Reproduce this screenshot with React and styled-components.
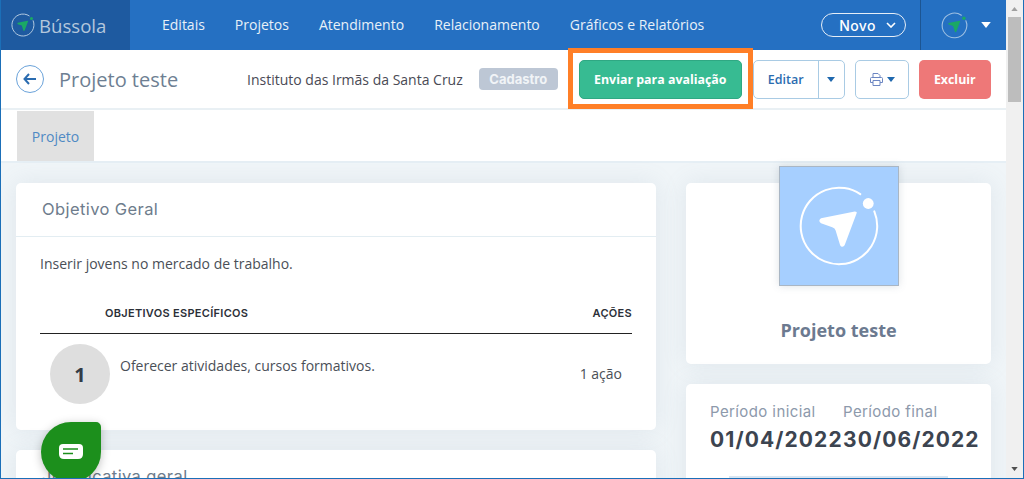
import React from "react";
import styled, { createGlobalStyle } from "styled-components";

const Global = createGlobalStyle`
  html, body { margin: 0; padding: 0; height: 100%; overflow: hidden; background: #fff; }
  * { box-sizing: border-box; }
  body { font-family: "Open Sans", "Liberation Sans", sans-serif; color: #3c4653; }
`;

const Frame = styled.div`
  position: relative;
  width: 1024px;
  height: 479px;
  overflow: hidden;
  display: flex;
  border-left: 1px solid #1b6fb8;
  border-right: 1px solid #1b6fb8;
  border-bottom: 1px solid #1b6fb8;
`;
const Page = styled.div`
  flex: 1;
  min-width: 0;
  display: flex;
  flex-direction: column;
  height: 560px;
`;
const ScrollTrack = styled.div`
  width: 17px;
  flex: none;
  background: #f0f0f0;
  position: relative;
`;
const ScrollThumb = styled.div`
  position: absolute;
  top: 17px;
  left: 2px;
  width: 13px;
  height: 85px;
  background: #bdbdbd;
`;
const ScrollArrow = styled.svg`
  position: absolute;
  left: 5px;
  ${p => p.$down ? "bottom: 7px;" : "top: 7px;"}
  width: 7px;
  height: 4px;
`;

const Header = styled.header`
  height: 50px;
  flex: none;
  background: #2570c2;
  display: flex;
  align-items: stretch;
`;
const Brand = styled.div`
  width: 129px;
  background: #1e5aa0;
  display: flex;
  align-items: center;
  padding-left: 9px;
  gap: 3px;
  color: #b4c7dc;
  font-size: 18.6px;
`;
const Nav = styled.nav`
  display: flex;
  align-items: center;
  gap: 30px;
  padding-left: 32px;
  flex: 1;
`;
const NavLink = styled.a`
  color: #e8f0f8;
  font-size: 14px;
  line-height: 50px;
`;
const NewButton = styled.button`
  width: 85px;
  height: 24px;
  margin: 13px 14px 0 0;
  border: 1px solid #e6eef7;
  border-radius: 12px;
  background: transparent;
  color: #fff;
  font: 500 14px "Inter", sans-serif;
  letter-spacing: 0.4px;
  display: flex;
  align-items: center;
  justify-content: center;
  gap: 10px;
  padding: 0 0 0 8px;
`;
const UserArea = styled.div`
  width: 86px;
  border-left: 1px solid #1c5592;
  display: flex;
  align-items: center;
  padding-left: 19px;
  gap: 12px;
`;

const TitleBar = styled.div`
  height: 60px;
  flex: none;
  display: flex;
  align-items: center;
  padding: 0 15px;
  border-bottom: 2px solid #e9f0f4;
  background: #fff;
`;
const BackButton = styled.div`
  width: 28px;
  height: 28px;
  border: 1px solid #6ba3da;
  border-radius: 50%;
  display: flex;
  align-items: center;
  justify-content: center;
  flex: none;
`;
const PageTitle = styled.h1`
  margin: 0 0 0 15px;
  font-size: 20px;
  font-weight: 400;
  color: #6e7f93;
  width: 188px;
  white-space: nowrap;
`;
const Org = styled.span`
  font-size: 14px;
  color: #4a4a55;
  white-space: nowrap;
`;
const Status = styled.span`
  margin-left: 16px;
  width: 79px;
  height: 22px;
  border-radius: 4px;
  background: #bdc7d5;
  color: #f1f4f7;
  font: 700 13px "Inter", sans-serif;
  display: flex;
  align-items: center;
  justify-content: center;
  flex: none;
`;
const HighlightWrap = styled.div`
  position: relative;
  margin-left: 21px;
  flex: none;
  &::after {
    content: "";
    position: absolute;
    left: -11px;
    right: -11px;
    top: -12px;
    bottom: -10px;
    border: 5px solid #ff7f27;
    pointer-events: none;
  }
`;
const ActionButton = styled.button`
  height: 39px;
  border-radius: 5px;
  border: 1px solid ${p => p.$border || "transparent"};
  background: ${p => p.$bg || "#fff"};
  color: ${p => p.$color || "#fff"};
  font: 700 12.4px "Open Sans", sans-serif;
  padding: 0;
  width: ${p => p.$w}px;
  margin-left: ${p => p.$ml || 0}px;
  flex: none;
  display: flex;
  align-items: center;
  justify-content: center;
`;
const Split = styled.div`
  margin-left: 11px;
  display: flex;
  height: 39px;
  width: 92px;
  border: 1px solid #a9cbe4;
  border-radius: 5px;
  flex: none;
`;
const SplitMain = styled.div`
  flex: 1;
  display: flex;
  align-items: center;
  justify-content: center;
  font: 600 12.5px "Open Sans", sans-serif;
  color: #2b6cb0;
  border-right: 1px solid #a9cbe4;
`;
const SplitCaret = styled.div`
  width: 25px;
  display: flex;
  align-items: center;
  justify-content: center;
`;
const PrintButton = styled(ActionButton)`
  gap: 3px;
`;

const Tabs = styled.div`
  height: 53px;
  flex: none;
  background: #fff;
  border-bottom: 2px solid #e6eff5;
  padding: 1px 0 1px 16px;
`;
const Tab = styled.div`
  width: 77px;
  height: 50px;
  background: #e1e1e1;
  color: #4f8ac4;
  font-size: 14px;
  display: flex;
  align-items: center;
  justify-content: center;
`;

const Content = styled.main`
  flex: 1;
  background: #f0f5f8;
  display: grid;
  grid-template-columns: 640px 305px;
  column-gap: 30px;
  padding: 20px 15px;
  align-content: start;
`;
const Column = styled.div`
  display: flex;
  flex-direction: column;
  gap: 20px;
  min-width: 0;
`;
const Card = styled.section`
  background: #fff;
  border-radius: 5px;
  box-shadow: 0 0 24px rgba(120, 140, 160, 0.14);
`;
const CardHead = styled.div`
  height: 54px;
  padding: 0 0 1px 26px;
  display: flex;
  align-items: center;
  font: 400 16.5px "Inter", sans-serif;
  letter-spacing: 0.4px;
  color: #6e7c8c;
  border-bottom: 1px solid #e3edf2;
`;
const CardBody = styled.div`
  padding: 17px 24px 0;
  height: 193px;
`;
const Text = styled.p`
  margin: 0;
  font-size: 14px;
  line-height: 19px;
  color: #4a4f57;
`;
const TableHead = styled.div`
  margin-top: 32px;
  height: 29px;
  display: flex;
  justify-content: space-between;
  padding-left: 65px;
  border-bottom: 1px solid #222;
  font: 600 11px "Inter", sans-serif;
  line-height: 16px;
  letter-spacing: 0.3px;
  color: #2c3038;
  text-transform: uppercase;
`;
const ObjectiveRow = styled.div`
  display: flex;
  padding: 10px 0 0 10px;
`;
const Circle = styled.div`
  width: 60px;
  height: 60px;
  border-radius: 50%;
  background: #dedede;
  color: #333c47;
  font-weight: 700;
  font-size: 20px;
  display: flex;
  align-items: center;
  justify-content: center;
  flex: none;
`;
const ObjectiveText = styled(Text)`
  margin: 12px 0 0 10px;
  flex: 1;
`;
const ActionCount = styled(Text)`
  margin: 20px 10px 0 0;
`;

const IdentityCard = styled(Card)`
  height: 181px;
  display: flex;
  flex-direction: column;
  align-items: center;
`;
const Logo = styled.div`
  width: 120px;
  height: 120px;
  margin-top: -17px;
  background: #a6cfff;
  border: 1px solid #a9b6c4;
  box-shadow: 0 0 8px rgba(90, 110, 130, 0.2);
  display: flex;
  align-items: center;
  justify-content: center;
  flex: none;
`;
const ProjectName = styled.div`
  margin-top: 32px;
  font-size: 18px;
  font-weight: 700;
  color: #6c7a90;
`;
const PeriodCard = styled(Card)`
  height: 200px;
  padding: 18px 12px 0 24px;
`;
const Periods = styled.div`
  display: flex;
`;
const Period = styled.div`
  width: ${p => p.$w}px;
  flex: none;
  white-space: nowrap;
`;
const PeriodLabel = styled.div`
  font: 400 15px "Inter", sans-serif;
  letter-spacing: 0.4px;
  color: #8d99ab;
  line-height: 20px;
`;
const PeriodValue = styled.div`
  margin-top: 6px;
  font: 700 21px "Inter", sans-serif;
  letter-spacing: 1.1px;
  color: #3c4450;
  line-height: 24px;
`;
const Bar = styled.div`
  margin: 24px 0 0 19px;
  width: 219px;
  height: 10px;
  background: #d9e6f2;
`;
const ChatButton = styled.button`
  position: absolute;
  left: 40px;
  top: 422px;
  width: 60px;
  height: 60px;
  border: 0;
  padding: 0;
  background: #1c8f1c;
  border-radius: 50% 5px 50% 50%;
  box-shadow: 0 2px 10px rgba(0, 0, 0, 0.25);
  display: flex;
  align-items: center;
  justify-content: center;
`;

const Compass = ({ size, ring = "#b5cbe0", arrow = "#1aa865", dot = "#1aa865", sw = 3 }) => (
  <svg width={size} height={size} viewBox="0 0 80 80" fill="none">
    <path d="M58.9 11.7A34 34 0 1 0 71.4 27" stroke={ring} strokeWidth={sw} strokeLinecap="round" />
    <circle cx="66" cy="20" r="4.8" fill={dot} />
    <path d="M24 33 L54 27 Q56.5 27 55.5 29 L45 57 Q42.5 60 41 57 L37 44 Q36.5 41.5 34 41 L24 37.5 Q21 35 24 33Z" fill={arrow} />
  </svg>
);
const Caret = ({ color, w = 8, h = 5 }) => (
  <svg width={w} height={h} viewBox="0 0 8 5"><path d="M0 0H8L4 5Z" fill={color} /></svg>
);

export default function App() {
  return (
    <Frame>
      <Global />
      <Page>
        <Header>
          <Brand>
            <Compass size={26} />
            <span>Bússola</span>
          </Brand>
          <Nav>
            <NavLink>Editais</NavLink>
            <NavLink>Projetos</NavLink>
            <NavLink>Atendimento</NavLink>
            <NavLink>Relacionamento</NavLink>
            <NavLink>Gráficos e Relatórios</NavLink>
          </Nav>
          <NewButton>
            Novo
            <svg width="10" height="6" viewBox="0 0 10 6" fill="none"><path d="M1 1L5 5L9 1" stroke="#fff" strokeWidth="1.6" /></svg>
          </NewButton>
          <UserArea>
            <Compass size={29} ring="#9fc0e2" />
            <Caret color="#fff" w={10} h={6} />
          </UserArea>
        </Header>
        <TitleBar>
          <BackButton>
            <svg width="14" height="12" viewBox="0 0 14 12" fill="none">
              <path d="M6 1L1.5 6L6 11M2 6H13" stroke="#2b6cb0" strokeWidth="2" />
            </svg>
          </BackButton>
          <PageTitle>Projeto teste</PageTitle>
          <Org>Instituto das Irmãs da Santa Cruz</Org>
          <Status>Cadastro</Status>
          <HighlightWrap>
            <ActionButton $w={163} $bg="#37bb92" $border="#2fa883">Enviar para avaliação</ActionButton>
          </HighlightWrap>
          <Split>
            <SplitMain>Editar</SplitMain>
            <SplitCaret><Caret color="#1f68ae" /></SplitCaret>
          </Split>
          <PrintButton $w={54} $ml={10} $border="#a9cbe4">
            <svg width="15" height="15" viewBox="0 0 15 15" fill="none" stroke="#6c86c2" strokeWidth="1">
              <path d="M4 5V1.5H9L11 3.5V5M1.5 10.5V6.5Q1.5 5.5 2.5 5.5H12.5Q13.5 5.5 13.5 6.5V10.5H11M4 10.5H1.5M4 8.5H11V13.5H4Z" />
            </svg>
            <Caret color="#1f68ae" />
          </PrintButton>
          <ActionButton $w={72} $ml={10} $bg="#ee7878">Excluir</ActionButton>
        </TitleBar>
        <Tabs><Tab>Projeto</Tab></Tabs>
        <Content>
          <Column>
            <Card>
              <CardHead>Objetivo Geral</CardHead>
              <CardBody>
                <Text>Inserir jovens no mercado de trabalho.</Text>
                <TableHead><span>Objetivos específicos</span><span>Ações</span></TableHead>
                <ObjectiveRow>
                  <Circle>1</Circle>
                  <ObjectiveText>Oferecer atividades, cursos formativos.</ObjectiveText>
                  <ActionCount>1 ação</ActionCount>
                </ObjectiveRow>
              </CardBody>
            </Card>
            <Card>
              <CardHead>Justificativa geral</CardHead>
            </Card>
          </Column>
          <Column>
            <IdentityCard>
              <Logo><Compass size={90} ring="#fff" arrow="#fff" dot="#fff" sw={1.8} /></Logo>
              <ProjectName>Projeto teste</ProjectName>
            </IdentityCard>
            <PeriodCard>
              <Periods>
                <Period $w={133}>
                  <PeriodLabel>Período inicial</PeriodLabel>
                  <PeriodValue>01/04/2022</PeriodValue>
                </Period>
                <Period $w={135}>
                  <PeriodLabel>Período final</PeriodLabel>
                  <PeriodValue>30/06/2022</PeriodValue>
                </Period>
              </Periods>
              <Bar />
            </PeriodCard>
          </Column>
        </Content>
      </Page>
      <ScrollTrack>
        <ScrollArrow viewBox="0 0 8 5"><path d="M0 5H8L4 0Z" fill="#a0a0a0" /></ScrollArrow>
        <ScrollThumb />
        <ScrollArrow $down viewBox="0 0 8 5"><path d="M0 0H8L4 5Z" fill="#505050" /></ScrollArrow>
      </ScrollTrack>
      <ChatButton>
        <svg width="24" height="16" viewBox="0 0 24 16">
          <path d="M4 0H20Q24 0 24 4V10Q24 15 19 15H5Q0 15 0 10V4Q0 0 4 0Z" fill="#fff" />
          <path d="M4 5H19M4 9.5H14" stroke="#1c8f1c" strokeWidth="1.6" />
        </svg>
      </ChatButton>
    </Frame>
  );
}
